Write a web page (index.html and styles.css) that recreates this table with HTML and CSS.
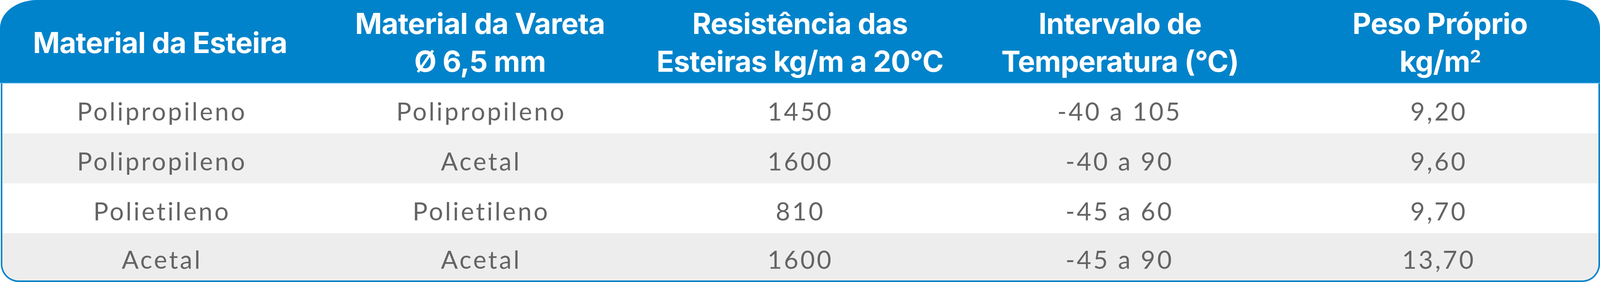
FILE: index.html
```html
<!DOCTYPE html>
<html lang="pt">
<head>
<meta charset="utf-8">
<title>Tabela de Materiais</title>
<link rel="stylesheet" href="styles.css">
</head>
<body>
<div class="table">
  <div class="head">
    <div class="hcell">Material da Esteira</div>
    <div class="hcell">Material da Vareta<br>Ø 6,5 mm</div>
    <div class="hcell">Resistência das<br>Esteiras kg/m a 20°C</div>
    <div class="hcell">Intervalo de<br>Temperatura (°C)</div>
    <div class="hcell">Peso Próprio<br>kg/m<sup>2</sup></div>
  </div>
  <div class="body">
    <div class="row">
      <div class="cell">Polipropileno</div>
      <div class="cell">Polipropileno</div>
      <div class="cell">1450</div>
      <div class="cell">-40 a 105</div>
      <div class="cell">9,20</div>
    </div>
    <div class="row alt">
      <div class="cell">Polipropileno</div>
      <div class="cell">Acetal</div>
      <div class="cell">1600</div>
      <div class="cell">-40 a 90</div>
      <div class="cell">9,60</div>
    </div>
    <div class="row">
      <div class="cell">Polietileno</div>
      <div class="cell">Polietileno</div>
      <div class="cell">810</div>
      <div class="cell">-45 a 60</div>
      <div class="cell">9,70</div>
    </div>
    <div class="row alt last">
      <div class="cell">Acetal</div>
      <div class="cell">Acetal</div>
      <div class="cell">1600</div>
      <div class="cell">-45 a 90</div>
      <div class="cell">13,70</div>
    </div>
  </div>
</div>
</body>
</html>
```
FILE: styles.css
```css
html, body {
  margin: 0;
  padding: 0;
  background: #ffffff;
}
.table {
  width: 100%;
  height: 723px;
  display: flex;
  flex-direction: column;
}
.head {
  height: 212px;
  flex: none;
  background: #0083ca;
  border-bottom: 2px solid #5fb4e6;
  border-radius: 95px 95px 0 0 / 72px 72px 0 0;
  display: grid;
  grid-template-columns: repeat(5, minmax(0, 1fr));
  align-items: center;
}
.hcell {
  font-family: Inter, "Liberation Sans", sans-serif;
  font-weight: 700;
  font-size: 74px;
  letter-spacing: -1px;
  line-height: 97px;
  color: #ffffff;
  text-align: center;
  padding-top: 6px;
}
.hcell sup {
  font-size: 0.6em;
  line-height: 0;
  vertical-align: 0.55em;
}
.body {
  flex: 1;
  margin-left: 2px;
  border: 4px solid #0083ca;
  border-top: none;
  border-radius: 0 0 46px 46px;
  overflow: hidden;
  display: flex;
  flex-direction: column;
}
.row {
  height: 128px;
  flex: none;
  background: #ffffff;
  display: grid;
  grid-template-columns: repeat(5, minmax(0, 1fr));
  align-items: center;
}
.row.alt {
  background: #f0f0f0;
}
.row.last {
  background: #ededed;
  flex: 1;
  height: auto;
}
.cell {
  font-family: Lato, "Open Sans", sans-serif;
  font-weight: 400;
  font-size: 64px;
  letter-spacing: 5px;
  color: #646464;
  text-align: center;
  padding-top: 12px;
}
```
